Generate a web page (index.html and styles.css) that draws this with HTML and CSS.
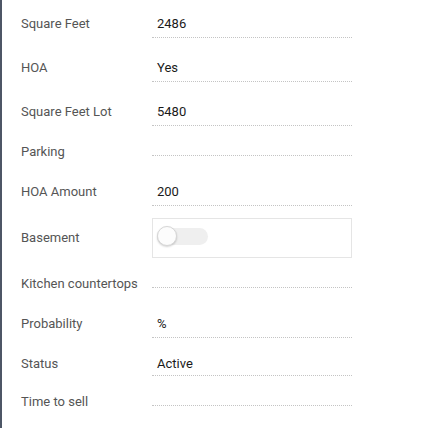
FILE: index.html
```html
<!DOCTYPE html>
<html>
<head>
<meta charset="utf-8">
<link rel="stylesheet" href="styles.css">
</head>
<body>
<div class="panel">
  <div class="row first"><div class="label">Square Feet</div><div class="value">2486</div></div>
  <div class="row"><div class="label">HOA</div><div class="value">Yes</div></div>
  <div class="row"><div class="label">Square Feet Lot</div><div class="value">5480</div></div>
  <div class="row row-empty"><div class="label">Parking</div><div class="value empty"></div></div>
  <div class="row after-empty"><div class="label">HOA Amount</div><div class="value">200</div></div>
  <div class="row row-switch"><div class="label">Basement</div>
    <div class="switch-box"><span class="switch"><span class="knob"></span></span></div>
  </div>
  <div class="row row-empty"><div class="label">Kitchen countertops</div><div class="value empty"></div></div>
  <div class="row after-empty"><div class="label">Probability</div><div class="value">%</div></div>
  <div class="row row-status"><div class="label">Status</div><div class="value">Active</div></div>
  <div class="row row-empty"><div class="label">Time to sell</div><div class="value empty"></div></div>
</div>
</body>
</html>
```
FILE: styles.css
```css
html, body {
  margin: 0;
  padding: 0;
  background: #fff;
}
body {
  font-family: Roboto, "Liberation Sans", sans-serif;
  font-size: 13px;
}
.panel {
  border-left: 2px solid #4d5666;
  min-height: 428px;
  box-sizing: border-box;
  padding: 11px 0 0 19px;
}
.row {
  display: flex;
  align-items: baseline;
  margin-top: 17px;
}
.row.first {
  margin-top: 0;
}
.row.row-empty {
  margin-top: 18px;
}
.row.after-empty {
  margin-top: 19px;
}
.label {
  width: 131px;
  flex: none;
  color: #555;
  line-height: 16px;
}
.value {
  width: 200px;
  box-sizing: border-box;
  padding: 5px 5px 5px;
  line-height: 16px;
  color: #1a1a1a;
  border-bottom: 1px dotted #c4c4c4;
}
.value.empty {
  padding: 0 5px;
}
.row.row-status {
  margin-top: 13px;
}
.row-status .value {
  padding-top: 5px;
  padding-bottom: 3px;
}
.row.row-switch {
  align-items: center;
  margin-top: 12px;
}
.switch-box {
  width: 200px;
  box-sizing: border-box;
  border: 1px solid #e5e5e5;
  padding: 7px 4px 11px;
}
.switch {
  display: block;
  position: relative;
  width: 51px;
  height: 20px;
}
.switch::before {
  content: "";
  position: absolute;
  left: 0;
  right: 0;
  top: 2px;
  height: 17px;
  border-radius: 9px;
  background: #efefef;
}
.knob {
  position: absolute;
  left: 0;
  top: 0;
  width: 20px;
  height: 20px;
  box-sizing: border-box;
  border-radius: 50%;
  background: #fcfcfc;
  border: 1px solid #d6d6d6;
  box-shadow: 0 1px 2px rgba(0,0,0,0.18);
}
```
